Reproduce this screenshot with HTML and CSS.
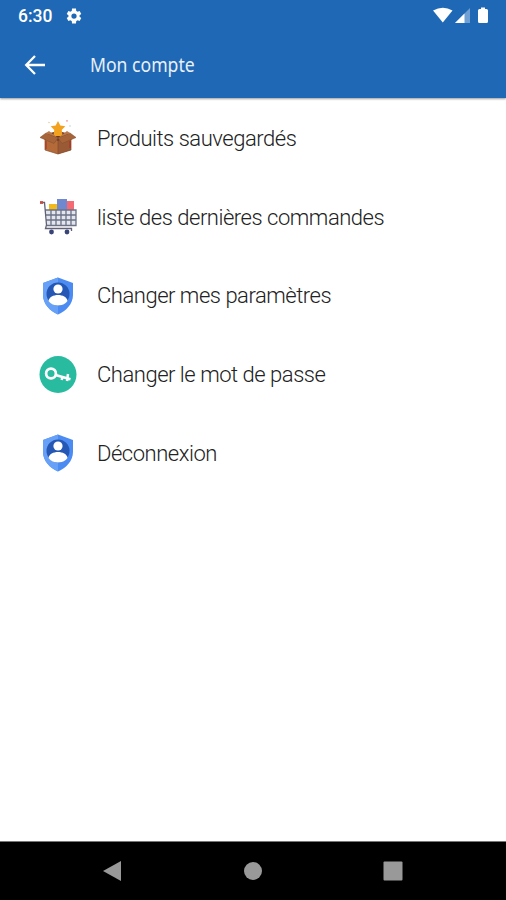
FILE: index.html
```html
<!DOCTYPE html>
<html lang="fr">
<head>
    <meta charset="utf-8">
    <title>Mon compte</title>
    <link rel="stylesheet" href="styles.css">
</head>
<body>
    <header class="header">
        <div class="status-bar">
            <span class="time">6:30</span>
            <svg class="gear" viewBox="0 0 24 24"><path fill="#fff" fill-rule="evenodd" d="M19.400 13a7.500 7.500 0 0 0 0-2l2.300-1.700-2.200-4-2.700 1.100a8 8 0 0 0-1.800-1L14.600 2H9.400L9 5.400a8 8 0 0 0-1.800 1L4.500 5.300l-2.200 4L4.600 11a7.500 7.500 0 0 0 0 2l-2.300 1.700 2.200 4 2.700-1.100a8 8 0 0 0 1.800 1l.4 3.400h5.200l.4-3.400a8 8 0 0 0 1.800-1l2.700 1.100 2.200-4zM12 15.500a3.500 3.500 0 1 1 0-7 3.500 3.500 0 0 1 0 7z"/></svg>
            <svg class="signals" viewBox="0 0 58 18">
                <path fill="#fff" d="M0 3.500Q10 -2 19.500 3.500L9.800 15.500Z"/>
                <path fill="#6f9fd3" d="M37 1V16H22Z"/>
                <path fill="#fff" d="M31.500 6.500V16H22Z"/>
                <path fill="#fff" d="M48 .5h4V2h1.500q1.500 0 1.500 1.500v11q0 1.500-1.500 1.500h-7q-1.500 0-1.500-1.500v-11Q45 2 46.500 2H48z"/>
            </svg>
        </div>
        <div class="toolbar">
            <svg class="back" viewBox="0 0 20 20"><path d="M20 10H1.500M10 1 1.200 10 10 19" fill="none" stroke="#fff" stroke-width="2.300"/></svg>
            <h1>Mon compte</h1>
        </div>
    </header>

    <ul class="menu">
        <li>
            <svg class="icon" viewBox="0 0 38 38">
                <path fill="#b56b39" d="M6 17l13 4 13-4v14l-13 4-13-4z"/>
                <path fill="#9a5a35" d="M19 21l13-4v14l-13 4z"/>
                <path fill="#6f3520" d="M7 15l12-3 12 3-12 7z"/>
                <path fill="#f3a21f" d="M19 2l2.300 4.600 5 .7-3.600 3.600 1 6.100H14.300l1-6.100-3.600-3.600 5-.7z"/>
                <path fill="#a76439" stroke="#84502f" stroke-width=".6" d="M7 14l12 5-4 5.500L1 18.500zM31 14l-12 5 4 5.500 14-6z"/>
                <path fill="#ba7748" d="M7 14l3-2 9 7zM31 14l-3-2-9 7z"/>
                <path stroke="#85492b" stroke-width=".7" fill="none" d="M19 20v15M6 20v11l13 4 13-4V20"/>
                <path stroke="#b02b22" fill="none" d="M7 22v8M31 22v7"/>
                <circle cx="28" cy="1.800" r=".9" fill="#ef9a91"/>
                <circle cx="10" cy="3.500" r=".7" fill="#d9c3a0"/>
                <circle cx="31" cy="7" r=".7" fill="#9ccfc2"/>
            </svg>
            <span>Produits sauvegardés</span>
        </li>
        <li>
            <svg class="icon" viewBox="0 0 38 38">
                <path fill="#f1b91b" d="M10 6h8v7h-8z"/>
                <path fill="#f66b73" d="M28 3h7v10h-7z"/>
                <path fill="#7088cd" d="M18 1h10v12H18z"/>
                <path fill="#e3e6ec" d="M7 12h30v15H8z"/>
                <path fill="none" stroke="#6c7287" stroke-width="1.300" d="M6 12h31v15.500H8M7 17h30M7 22h30M12 12v15M17 12v15M22 12v15M27 12v15M32 12v15"/>
                <path fill="none" stroke="#606277" stroke-width="1.300" d="M3 4.500h2.500L7.500 27l-1 3.500H32.500V33"/>
                <path stroke="#cc4b3f" stroke-width="2.800" d="M1 4.500h3"/>
                <circle cx="12.500" cy="34" r="2.400" fill="#394477"/>
                <circle cx="28" cy="34" r="2.400" fill="#394477"/>
            </svg>
            <span>liste des dernières commandes</span>
        </li>
        <li>
            <svg class="icon" viewBox="0 0 38 38">
                <path fill="#4c8bf2" d="M19 .5L34 6v12c0 9-7 16-15 19.500C11 34 4 27 4 18V6z"/>
                <path fill="#67a1f7" d="M19 .5V37.500C11 34 4 27 4 18V6z"/>
                <circle cx="19" cy="17" r="11.500" fill="#2458b4"/>
                <circle cx="19" cy="12" r="4.600" fill="#fff"/>
                <path fill="#fff" d="M9.500 24c1-8 18-8 19 0-4 6-15 6-19 0z"/>
            </svg>
            <span>Changer mes paramètres</span>
        </li>
        <li>
            <svg class="icon" viewBox="0 0 38 38">
                <circle cx="19" cy="19.500" r="18.500" fill="#28bba0"/>
                <g fill="none" stroke="#fff">
                    <circle cx="12" cy="18.500" r="4.900" stroke-width="2.700"/>
                    <path stroke-width="2.500" d="M16.500 20L31.500 24.300M23.500 21.500l-.8 3.500M29 19l-1 7"/>
                </g>
            </svg>
            <span>Changer le mot de passe</span>
        </li>
        <li>
            <svg class="icon" viewBox="0 0 38 38">
                <path fill="#4c8bf2" d="M19 .5L34 6v12c0 9-7 16-15 19.500C11 34 4 27 4 18V6z"/>
                <path fill="#67a1f7" d="M19 .5V37.500C11 34 4 27 4 18V6z"/>
                <circle cx="19" cy="17" r="11.500" fill="#2458b4"/>
                <circle cx="19" cy="12" r="4.600" fill="#fff"/>
                <path fill="#fff" d="M9.500 24c1-8 18-8 19 0-4 6-15 6-19 0z"/>
            </svg>
            <span>Déconnexion</span>
        </li>
    </ul>

    <nav class="nav-bar">
        <svg viewBox="0 0 20 20"><path fill="#999" d="M1 10L19 0v20z"/></svg>
        <svg viewBox="0 0 20 20"><circle cx="10" cy="10" r="9" fill="#999"/></svg>
        <svg viewBox="0 0 20 20"><rect x=".5" y=".5" width="19" height="19" rx="1" fill="#999"/></svg>
    </nav>
</body>
</html>
```
FILE: styles.css
```css
* { margin: 0; padding: 0; box-sizing: border-box; }
body { height: 900px; display: flex; flex-direction: column; background: #fff; font-family: Roboto, sans-serif; overflow: hidden; }
svg { display: block; flex: none; overflow: visible; }
.header { height: 98px; background: #1f68b5; color: #fff; box-shadow: 0 1px 2px rgba(0,0,0,0.4); }
.status-bar { height: 32px; display: flex; align-items: center; padding: 0 15px 0 18px; }
.time { width: 47px; font-size: 17.5px; font-weight: 500; }
.gear { width: 18px; height: 18px; }
.signals { width: 58px; height: 18px; margin-left: auto; }
.toolbar { height: 66px; display: flex; align-items: center; padding-left: 25px; }
.back { width: 20px; height: 20px; }
h1 { margin-left: 45px; font-family: "Noto Sans", sans-serif; font-size: 20px; font-weight: 400; line-height: 24px; color: #e9f0f8; transform: scaleX(0.88); transform-origin: left; white-space: nowrap; }
.menu { flex: 1; list-style: none; padding-top: 1px; }
.menu li { height: 78.7px; display: flex; align-items: center; padding-left: 39px; }
.icon { width: 38px; height: 38px; }
.menu span { margin-left: 20px; font-size: 22px; font-weight: 300; color: #222; letter-spacing: -0.47px; white-space: nowrap; }
.nav-bar { height: 59px; background: #000; border-top: 1px solid #777; display: flex; align-items: center; justify-content: space-between; padding: 0 103px 0 102px; }
.nav-bar svg { width: 20px; height: 20px; }
```
